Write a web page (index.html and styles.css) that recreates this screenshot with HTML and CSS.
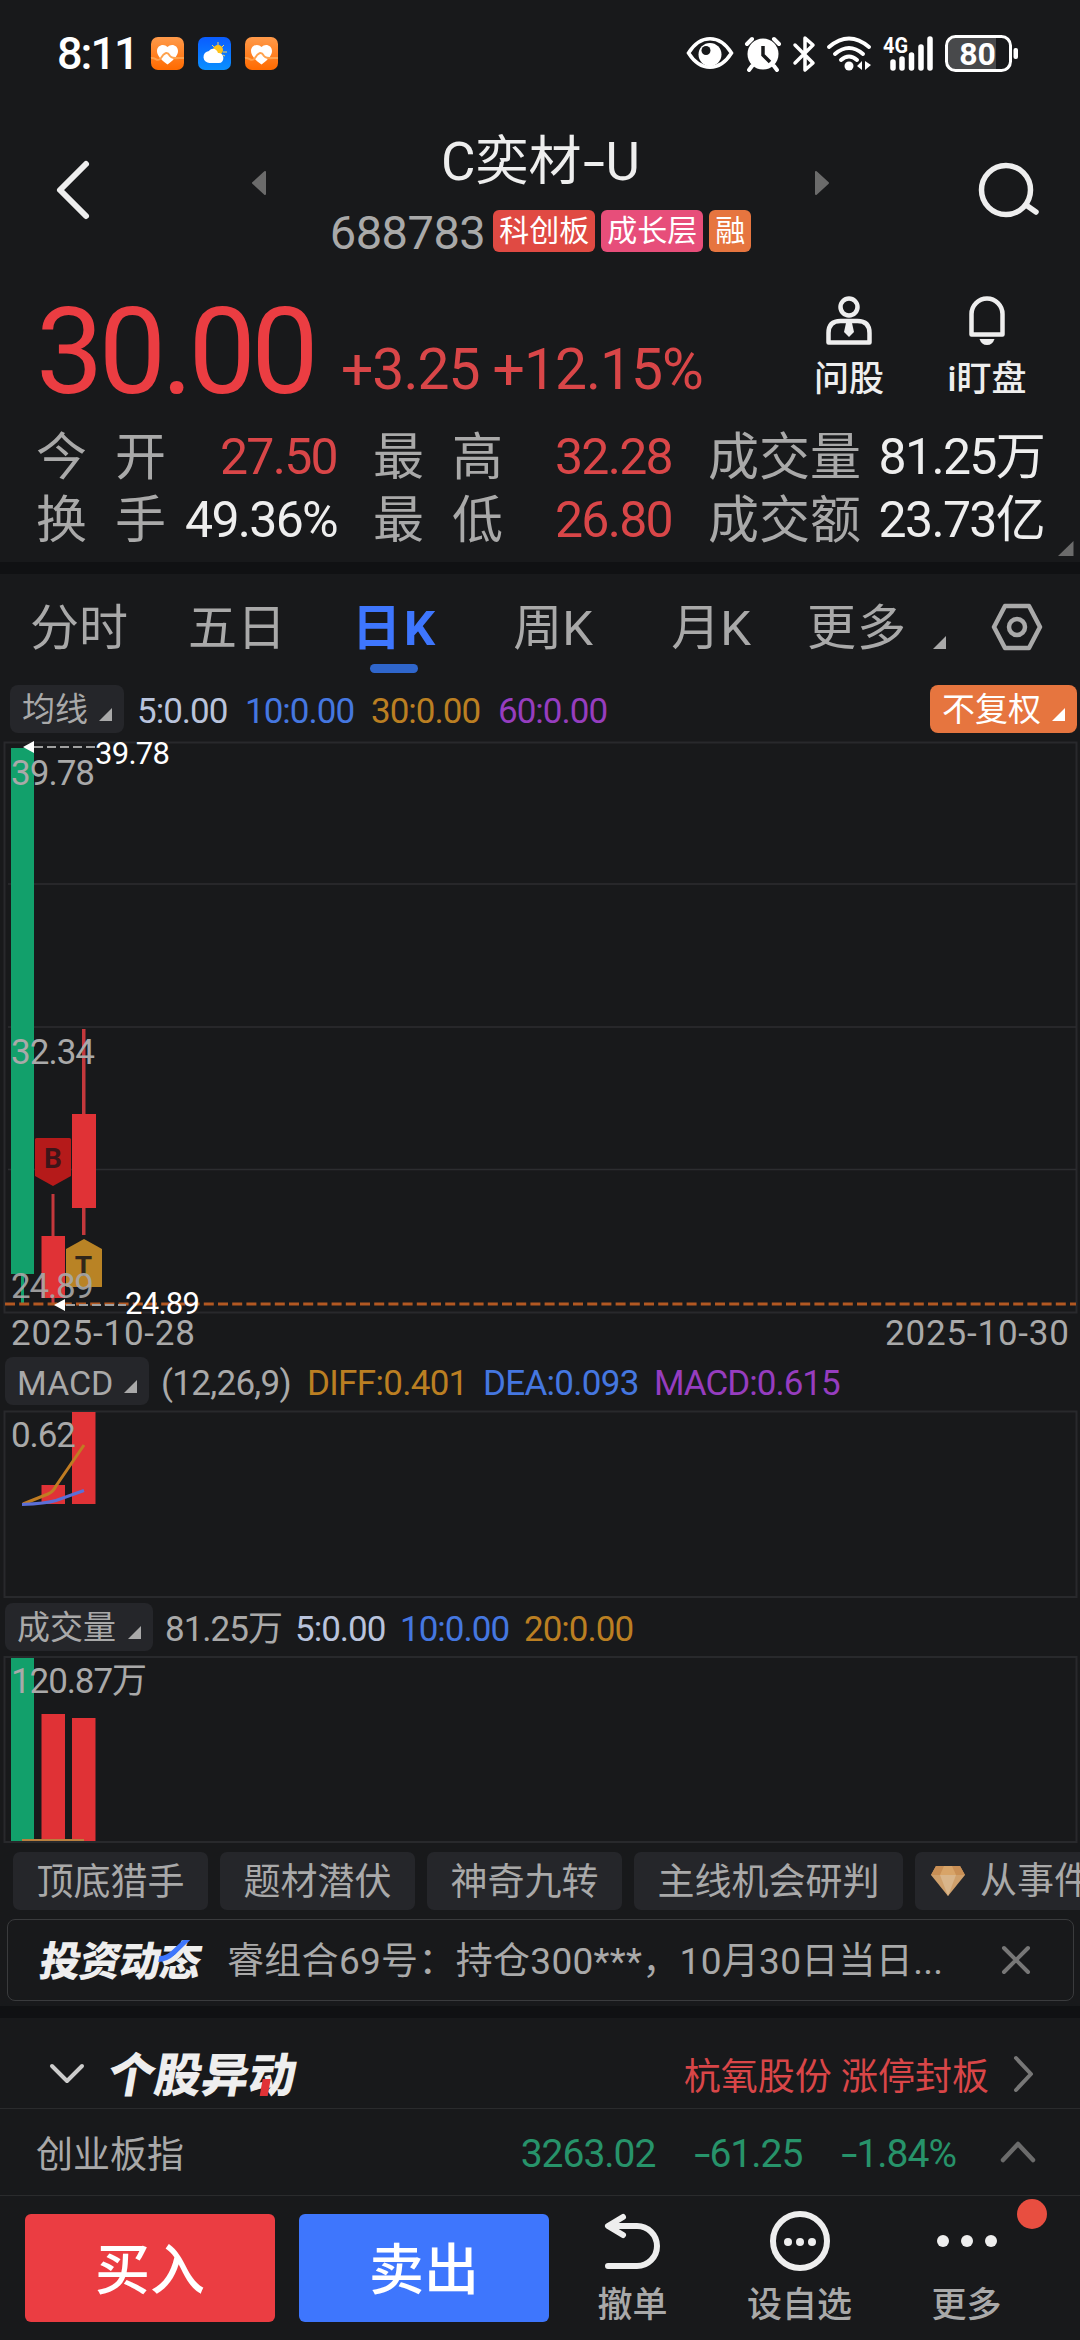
FILE: index.html
```html
<!DOCTYPE html>
<html lang="zh-CN">

<head>
  <meta charset="utf-8">
  <meta name="viewport" content="width=device-width, initial-scale=1">
  <title>C奕材-U 688783</title>
  <link rel="stylesheet" href="styles.css">
</head>

<body>
  <div class="status">
    <span class="time">8:11</span>
    <svg class="app" width="33" height="33" viewBox="0 0 33 33">
      <defs>
        <linearGradient id="orange" x1="0" y1="0" x2="0" y2="1"><stop offset="0" stop-color="#ff9a4a"/><stop offset="1" stop-color="#ff6a00"/></linearGradient>
        <linearGradient id="blue" x1="0" y1="0" x2="0" y2="1"><stop offset="0" stop-color="#0a5cff"/><stop offset="1" stop-color="#0a90ff"/></linearGradient>
      </defs>
      <rect width="33" height="33" rx="7" fill="url(#orange)"/>
      <path d="M16.500 27.500C9 22 6 18 6 14c0-6 7-8 10.500-4C20 6 27 8 27 14c0 4-3 8-10.500 13.500z" fill="#fff"/>
      <path d="M0 21c5-1 6 5 10 0 3-5 6-7 9-2 2 3 7 2 14 2" fill="none" stroke="#ffa24d" stroke-width="2"/>
    </svg>
    <svg class="app" width="33" height="33" viewBox="0 0 33 33">
      <rect width="33" height="33" rx="7" fill="url(#blue)"/>
      <circle cx="20" cy="13" r="5" fill="#ffc21a"/>
      <path d="M20 5v3M14 8l2 2M26 8l-2 2M25 15h4M25 18l2 1" stroke="#ffd65a" stroke-width="1"/>
      <path d="M12 26a6 6 0 0 1-1-12c3-4 8-2 9 2 7-1 7 10 1 10z" fill="#fff"/>
    </svg>
    <svg class="app" width="33" height="33" viewBox="0 0 33 33">
      <rect width="33" height="33" rx="7" fill="url(#orange)"/>
      <path d="M16.500 27.500C9 22 6 18 6 14c0-6 7-8 10.500-4C20 6 27 8 27 14c0 4-3 8-10.500 13.500z" fill="#fff"/>
      <path d="M0 21c5-1 6 5 10 0 3-5 6-7 9-2 2 3 7 2 14 2" fill="none" stroke="#ffa24d" stroke-width="2"/>
    </svg>
    <span class="fill"></span>
    <svg width="332" height="38" viewBox="687 35 332 38">
      <!-- eye -->
      <path d="M688.500 53c12-19 31-19 43 0-12 19-31 19-43 0z" fill="none" stroke="#fff" stroke-width="3.500"/>
      <circle cx="710" cy="54.500" r="11.500" fill="#fff"/><circle cx="706" cy="50.500" r="4.500" fill="#18191b"/>
      <!-- alarm -->
      <circle cx="763" cy="54" r="15.500" fill="#fff"/>
      <path d="M763 46v9l7 7" fill="none" stroke="#18191b" stroke-width="3.500"/>
      <path d="M747 44l5-5M779 44l-5-5M752 66l-3 4M774 66l3 4" stroke="#fff" stroke-width="4" stroke-linecap="round"/>
      <!-- bluetooth -->
      <path d="M795 45l18 18-8 7V38l8 7-18 18" fill="none" stroke="#fff" stroke-width="3.500" stroke-linejoin="round" stroke-linecap="round"/>
      <!-- wifi -->
      <path d="M829 47q20-17 40 0M835 54q14-12 28 0M841 60q8-7 16 0" fill="none" stroke="#fff" stroke-width="4" stroke-linecap="round"/>
      <circle cx="849" cy="66" r="4.500" fill="#fff"/>
      <path d="M857 66l5-5v9zM865 61l6 4-6 5z" fill="#fff"/>
      <!-- signal -->
      <text x="883" y="53" font-size="22" font-weight="700" fill="#fff" textLength="25" lengthAdjust="spacingAndGlyphs">4G</text>
      <path d="M893 62v6M902 59v9M911.500 55v13M921 47v21M930 39v29" stroke="#fff" stroke-width="5.500" stroke-linecap="round"/>
      <!-- battery -->
      <path d="M954 38h42v31h-42q-6 0-6-6V44q0-6 6-6z" fill="#48494b"/>
      <rect x="946.500" y="36.500" width="64" height="34" rx="9" fill="none" stroke="#fff" stroke-width="3"/>
      <rect x="1013.500" y="48" width="4.500" height="11" rx="2" fill="#fff"/>
      <text x="977.500" y="65" font-size="32" font-weight="700" fill="#fff" text-anchor="middle">80</text>
    </svg>
  </div>

  <div class="header">
    <svg class="back" width="40" height="64" viewBox="0 0 40 64"><path d="M34 6L8 32l26 26" fill="none" stroke="#eee" stroke-width="6" stroke-linecap="round" stroke-linejoin="round"/></svg>
    <svg class="prev" width="14" height="24" viewBox="0 0 14 24"><path d="M13 1v22L1 12z" fill="#6b6b6b" stroke="#6b6b6b" stroke-width="2" stroke-linejoin="round"/></svg>
    <div class="name">
      <h1>C奕材<i>-</i>U</h1>
      <div class="code">
        <span class="num">688783</span>
        <b class="tag red">科创板</b>
        <b class="tag pink">成长层</b>
        <b class="tag orange">融</b>
      </div>
    </div>
    <svg class="next" width="14" height="24" viewBox="0 0 14 24"><path d="M1 1v22l12-11z" fill="#6b6b6b" stroke="#6b6b6b" stroke-width="2" stroke-linejoin="round"/></svg>
    <svg class="search" width="64" height="58" viewBox="0 0 64 58"><circle cx="29" cy="29" r="24.500" fill="none" stroke="#eee" stroke-width="5.500"/><path d="M49 44l10 7" stroke="#eee" stroke-width="5.500" stroke-linecap="round"/></svg>
  </div>

  <div class="quote">
    <div class="top">
      <span class="price">30.00</span>
      <span class="change">+3.25 +12.15%</span>
      <div class="act">
        <svg width="48" height="50" viewBox="0 0 48 50"><g fill="none" stroke="#eee" stroke-width="4.500" stroke-linejoin="round"><circle cx="24" cy="12" r="8.500"/><path d="M3.500 47.500V38q0-12 12-12h17q12 0 12 12v9.500z"/></g><path d="M21 28h6l2 9-5 5-5-5z" fill="#eee"/></svg>
        问股
      </div>
      <div class="act">
        <svg width="48" height="50" viewBox="0 0 48 50"><path d="M8.500 39.500V19a15.500 15.500 0 0 1 31 0v20.500z" fill="none" stroke="#eee" stroke-width="4.500" stroke-linejoin="round"/><path d="M16.500 44h15q-2 6-7.500 6t-7.500-6z" fill="#eee"/></svg>
        i盯盘
      </div>
    </div>
    <div class="stats">
      <span class="k w2">今开</span><span class="v up">27.50</span>
      <span class="k w2 mid">最高</span><span class="v up">32.28</span>
      <span class="k mid">成交量</span><span class="v">81.25万</span>
      <span class="k w2">换手</span><span class="v">49.36%</span>
      <span class="k w2 mid">最低</span><span class="v up">26.80</span>
      <span class="k mid">成交额</span><span class="v">23.73亿</span>
    </div>
    <svg class="corner" width="16" height="15"><path d="M15.500 0v15H0z" fill="#6b6b6b"/></svg>
  </div>
  <div class="band"></div>

  <div class="tabs">
    <span>分时</span>
    <span>五日</span>
    <span class="on">日K</span>
    <span>周K</span>
    <span>月K</span>
    <span class="more">更多</span>
    <svg class="tri" width="13" height="13"><path d="M13 0v13H0z"/></svg>
    <svg class="hex" width="52" height="48" viewBox="0 0 52 48"><path d="M14 3h24l11 21-11 21H14L3 24z" fill="none" stroke="#a9a9a9" stroke-width="4.500" stroke-linejoin="round"/><circle cx="26" cy="24" r="8" fill="none" stroke="#a9a9a9" stroke-width="4.500"/></svg>
  </div>

  <div class="legend ma">
    <span class="pill">均线<svg class="tri" width="13" height="13"><path d="M13 0v13H0z"/></svg></span>
    <span class="c1">5:0.00</span>
    <span class="c2">10:0.00</span>
    <span class="c3">30:0.00</span>
    <span class="c4">60:0.00</span>
    <span class="pill adj">不复权<svg class="tri" width="13" height="13"><path d="M13 0v13H0z"/></svg></span>
  </div>

  <svg class="chart" width="1080" height="620" viewBox="0 737 1080 620">
    <path d="M4.500 742.500h1072v570H4.500z" fill="none" stroke="#28292c" stroke-width="2"/>
    <path d="M8 884h1068M8 1027h1068M8 1169.500h1068" stroke="#2c2d30" stroke-width="1.500"/>
    <g fill="#12a06b"><path d="M11 748h23v526H11zM21 1274h3v31h-3z"/></g>
    <g fill="#e03236">
      <path d="M41.500 1236H65v62H41.500zM72 1114h24v94H72z"/>
      <path d="M51.500 1194h3v42h-3zM51.500 1298h3v6h-3zM82 1029h3.500v85H82zM82 1208h3.500v27H82z" fill="#c4383c"/>
    </g>
    <path d="M36.500 1138h33q1.500 0 1.500 1.500V1176l-18 10-18-10v-36.500q0-1.500 1.500-1.500z" fill="#b51a1a"/>
    <path d="M66 1249l18-10 18 10v37.500q0 .5-1 .5H67q-1 0-1-1z" fill="#b98325"/>
    <text x="53" y="1168" class="mark" fill="#3d1519">B</text>
    <text x="83.500" y="1276" class="mark" fill="#30261a">T</text>
    <path d="M5 1304h1071" stroke="#b25822" stroke-width="3" stroke-dasharray="10 4.200"/>
    <path d="M34 747h62M66 1305h60" stroke="#a0a0a0" stroke-width="2" stroke-dasharray="9 4"/>
    <path d="M23 747l11-6v12zM54 1305l11-6v12z" fill="#fff"/>
    <g class="axis">
      <text x="11" y="785" textLength="84">39.78</text>
      <text x="11" y="1064" textLength="84">32.34</text>
      <text x="11" y="1298" textLength="83" opacity=".9">24.89</text>
      <text x="11" y="1345" textLength="184">2025-10-28</text>
      <text x="885" y="1345" textLength="184">2025-10-30</text>
    </g>
    <g class="peak">
      <text x="95" y="764" textLength="75">39.78</text>
      <text x="125" y="1314" textLength="75">24.89</text>
    </g>
  </svg>

  <div class="legend macd">
    <span class="pill">MACD<svg class="tri" width="13" height="13"><path d="M13 0v13H0z"/></svg></span>
    <span>(12,26,9)</span>
    <span class="c3">DIFF:0.401</span>
    <span class="c2">DEA:0.093</span>
    <span class="c4">MACD:0.615</span>
  </div>
  <svg class="chart" width="1080" height="198" viewBox="0 1405 1080 198">
    <path d="M4.500 1411.500h1072v185.500H4.500z" fill="none" stroke="#28292c" stroke-width="2"/>
    <path d="M72 1412h23.500v92H72zM41.500 1485H65v19H41.500z" fill="#e03236"/>
    <text class="axis" x="11" y="1447" textLength="65">0.62</text>
    <path d="M23 1504l25-10q5-2 8-8l28-41" fill="none" stroke="#c07c22" stroke-width="3"/>
    <path d="M22 1504.500q24-1 34-4l28-10" fill="none" stroke="#5b6fd8" stroke-width="3"/>
  </svg>

  <div class="legend vol">
    <span class="pill">成交量<svg class="tri" width="13" height="13"><path d="M13 0v13H0z"/></svg></span>
    <span>81.25万</span>
    <span class="c1">5:0.00</span>
    <span class="c2">10:0.00</span>
    <span class="c3">20:0.00</span>
  </div>
  <svg class="chart" width="1080" height="201" viewBox="0 1651 1080 201">
    <path d="M4.500 1657h1072v185H4.500z" fill="none" stroke="#28292c" stroke-width="2"/>
    <path d="M11 1658h23v183H11z" fill="#12a06b"/>
    <path d="M41.500 1714H65v127H41.500zM72 1718h23.500v123H72z" fill="#e03236"/>
    <path d="M22 1840h62" stroke="#b9803f" stroke-width="2"/>
    <text class="axis" x="11" y="1693" textLength="136">120.87万</text>
  </svg>

  <div class="chips">
    <span>顶底猎手</span>
    <span>题材潜伏</span>
    <span>神奇九转</span>
    <span>主线机会研判</span>
    <span class="gem"><svg width="36" height="32" viewBox="0 0 36 32"><path d="M6 1h24l5 9-17 21L1 10z" fill="#cfa06c"/><path d="M6 1h24l5 9H1z" fill="#c98f55"/><path d="M10 10h16l-8 21z" fill="#d9b58a"/><path d="M10 10l4-9h8l4 9z" fill="#d8a468"/></svg>从事件</span>
  </div>

  <div class="news">
    <span class="logo">投资动态
      <svg width="30" height="24" viewBox="0 0 30 24"><path d="M1 17q7 0 12-6L22 1h7L17 15q-7 8-16 8z" fill="#3e76fd"/></svg>
    </span>
    <span class="msg">睿组合69号：持仓300***，10月30日当日...</span>
    <svg width="32" height="32" viewBox="0 0 32 32"><path d="M4 4l24 24M28 4L4 28" stroke="#777" stroke-width="4" stroke-linecap="round"/></svg>
  </div>
  <div class="band"></div>

  <div class="row move">
    <svg width="36" height="22" viewBox="0 0 36 22"><path d="M3 3l15 15L33 3" fill="none" stroke="#ccc" stroke-width="4" stroke-linecap="round" stroke-linejoin="round"/></svg>
    <span class="logo">个股异动<i></i></span>
    <span class="fill"></span>
    <span class="up">杭氧股份 涨停封板</span>
    <svg class="go" width="22" height="38" viewBox="0 0 22 38"><path d="M3 3l15 16L3 35" fill="none" stroke="#777" stroke-width="4" stroke-linecap="round" stroke-linejoin="round"/></svg>
  </div>
  <div class="row index">
    <span>创业板指</span>
    <span class="fill"></span>
    <span class="down">3263.02</span>
    <span class="down d2"><i>-</i>61.25</span>
    <span class="down d3"><i>-</i>1.84%</span>
    <svg width="36" height="22" viewBox="0 0 36 22"><path d="M3 19L18 3l15 16" fill="none" stroke="#6b6b6b" stroke-width="4.500" stroke-linecap="round" stroke-linejoin="round"/></svg>
  </div>

  <div class="trade">
    <a class="btn buy">买入</a>
    <a class="btn sell">卖出</a>
    <div class="tool">
      <svg width="60" height="62" viewBox="0 0 60 62"><path d="M20 7L5 16l15 9M6 16h28a20 20 0 0 1 0 40H5" fill="none" stroke="#eee" stroke-width="6" stroke-linecap="round" stroke-linejoin="round"/></svg>
      撤单
    </div>
    <div class="tool">
      <svg width="62" height="62" viewBox="0 0 62 62"><circle cx="31" cy="31" r="27" fill="none" stroke="#eee" stroke-width="6"/><g fill="#eee"><circle cx="19" cy="32" r="4"/><circle cx="31" cy="32" r="4"/><circle cx="43" cy="32" r="4"/></g></svg>
      设自选
    </div>
    <div class="tool">
      <svg width="62" height="62" viewBox="0 0 62 62"><g fill="#eee"><circle cx="7" cy="31" r="6"/><circle cx="31" cy="31" r="6"/><circle cx="55" cy="31" r="6"/></g></svg>
      更多
      <em class="dot"></em>
    </div>
  </div>
</body>

</html>
```

FILE: styles.css
```css
* {
  box-sizing: border-box;
}

body {
  margin: 0;
  width: 1080px;
  height: 2340px;
  overflow: hidden;
  background: #18191b;
  color: #a9a9a9;
  font-family: Roboto, "Noto Sans CJK SC", sans-serif;
  font-size: 37px;
  white-space: nowrap;
}

svg {
  display: block;
  flex: none;
  overflow: visible;
}

i, em {
  font-style: normal;
}

.fill {
  flex: 1;
}

.up {
  color: #d94648;
}

.down {
  color: #27936a;
}

/* status bar */
.status {
  display: flex;
  align-items: center;
  height: 107px;
  padding: 0 61px 0 57px;
}

.time {
  width: 94px;
  color: #fff;
  font-size: 45px;
  font-weight: 500;
  letter-spacing: -2px;
}

.app {
  margin-right: 14px;
}

/* header */
.header {
  display: flex;
  align-items: center;
  height: 165px;
}

.back {
  margin-left: 52px;
}

.prev {
  margin: 0 0 13px 160px;
}

.name {
  width: 549px;
  height: 165px;
  padding-top: 19px;
  text-align: center;
}

h1 {
  margin: 0 0 12px;
  color: #eee;
  font-size: 53px;
  font-weight: 400;
  line-height: 72px;
}

h1 i {
  display: inline-block;
  width: 24px;
  transform: scaleX(1.5);
}

.code {
  display: flex;
  justify-content: center;
  height: 42px;
  line-height: 42px;
}

.num {
  margin-right: 8px;
  font-size: 47px;
  letter-spacing: -.5px;
  line-height: 46px;
}

.tag {
  margin-right: 6px;
  padding: 0 6px;
  border-radius: 6px;
  color: #fff;
  font-size: 30px;
  font-weight: 400;
}

.tag.red {
  background: #e04a43;
}

.tag.pink {
  background: #e74e7a;
}

.tag.orange {
  margin-right: 0;
  background: #e6753f;
}

.next {
  margin-bottom: 13px;
}

.search {
  margin-left: 148px;
}

/* quote */
.quote {
  position: relative;
  height: 290px;
  padding: 22px 0 0 36px;
}

.top {
  display: flex;
  height: 132px;
}

.price {
  flex: none;
  width: 305px;
  color: #eb3d42;
  font-size: 120px;
  letter-spacing: -4.7px;
  line-height: 117px;
}

.change {
  flex: none;
  width: 439px;
  color: #d94648;
  font-size: 57px;
  letter-spacing: -1px;
  line-height: 151px;
}

.act {
  display: flex;
  flex: none;
  flex-direction: column;
  align-items: center;
  width: 138px;
  color: #eee;
  font-size: 35px;
  font-weight: 500;
  line-height: 69px;
}

.act svg {
  margin-top: 1px;
}

.stats {
  display: grid;
  grid-template-columns: 130px 171px 166px 169px 189px 183px;
  line-height: 63px;
}

.k {
  font-size: 51px;
}

.w2 {
  letter-spacing: 28px;
}

.mid {
  padding-left: 36px;
}

.v {
  color: #eee;
  font-size: 50px;
  letter-spacing: -1.7px;
  text-align: right;
}

.v.up {
  color: #d94648;
}

.corner {
  position: absolute;
  right: 6px;
  bottom: 6px;
}

.band {
  height: 12px;
  background: #101113;
}

/* period tabs */
.tabs {
  display: flex;
  align-items: center;
  height: 106px;
  font-size: 49px;
}

.tabs span {
  position: relative;
  top: -4px;
  width: 158px;
  text-align: center;
}

.tabs .on {
  color: #3e76fd;
  font-weight: 700;
  letter-spacing: 3px;
}

.tabs .on::after {
  content: "";
  position: absolute;
  left: 54px;
  bottom: -14px;
  width: 48px;
  height: 9px;
  border-radius: 5px;
  background: #2f66cc;
}

.tabs .more {
  width: 131px;
  padding-left: 17px;
  text-align: left;
  letter-spacing: 1px;
}

.tri {
  fill: #a9a9a9;
}

.tabs .tri {
  margin: 31px 45px 0 12px;
}

/* indicator legends */
.legend {
  display: flex;
  height: 48px;
  font-size: 35px;
  letter-spacing: -1px;
  line-height: 53px;
}

.pill {
  display: flex;
  height: 48px;
  padding: 0 12px;
  border-radius: 8px;
  background: #25262a;
  font-size: 33px;
  letter-spacing: 0;
  line-height: 50px;
}

.pill .tri {
  margin: 23px 0 0 auto;
}

.ma {
  height: 52px;
  margin-top: 5px;
  padding-left: 10px;
}

.ma .pill {
  width: 114px;
  margin-right: 13px;
}

.ma .c1 { width: 108px; }
.ma .c2 { width: 126px; }
.ma .c3 { width: 127px; }
.ma .c4 { width: 112px; }

.ma .adj {
  width: 147px;
  margin: 0 3px 0 auto;
  background: #e6753f;
  color: #fff;
}

.adj .tri {
  fill: #fff;
}

.c1 { color: #b9c3dc; }
.c2 { color: #4577e0; }
.c3 { color: #bb7f22; }
.c4 { color: #963dbf; }

.macd,
.vol {
  padding-left: 5px;
}

.macd {
  letter-spacing: -.7px;
}

.macd .pill {
  width: 144px;
  margin-right: 12px;
  font-size: 34px;
  line-height: 52px;
}

.macd span:nth-child(2) { width: 146px; }
.macd .c3 { width: 176px; }
.macd .c2 { width: 171px; }
.macd .c4 { letter-spacing: -1px; }

.vol .pill {
  width: 148px;
  margin-right: 12px;
}

.vol span:nth-child(2) { width: 130px; }
.vol .c1 { width: 105px; }
.vol .c2 { width: 124px; }

/* charts */
.axis {
  fill: #a9a9a9;
  font-size: 35px;
}

.peak {
  fill: #fff;
  font-size: 31px;
}

.mark {
  font-size: 28px;
  font-weight: 700;
  text-anchor: middle;
}

.chips {
  display: flex;
  gap: 12px;
  height: 58px;
  padding-left: 13px;
  overflow: hidden;
  line-height: 61px;
}

.chips span {
  flex: none;
  width: 195px;
  border-radius: 7px;
  background: #25262a;
  text-align: center;
}

.chips span:nth-child(4) {
  width: 269px;
}

.chips .gem {
  display: flex;
  align-items: center;
  width: 260px;
  padding-left: 15px;
}

.gem svg {
  margin-right: 14px;
}

.news {
  display: flex;
  align-items: center;
  height: 82px;
  margin: 9px 6px 5px 7px;
  padding-left: 33px;
  border: 1px solid #3a3b3d;
  border-radius: 8px;
}

.logo {
  position: relative;
  color: #eee;
  font-size: 41px;
  font-weight: 900;
  letter-spacing: -1px;
  transform: skewX(-10deg);
}

.logo svg {
  position: absolute;
  left: 117px;
  top: 11px;
}

.news .logo {
  top: -2px;
  width: 186px;
}

.msg {
  width: 773px;
  margin-top: -5px;
  letter-spacing: .3px;
}

.row {
  display: flex;
  align-items: center;
  border-bottom: 1px solid #2a2b2d;
}

.move {
  height: 91px;
  padding: 22px 45px 0 49px;
}

.move .logo {
  top: -3px;
  margin-left: 24px;
  font-size: 47px;
  letter-spacing: 0;
}

.move .logo i {
  position: absolute;
  left: 155px;
  bottom: 10px;
  width: 8px;
  height: 17px;
  background: #e03236;
}

.go {
  margin-left: 24px;
}

.index {
  height: 87px;
  padding: 0 44px 0 36px;
}

.down {
  padding-top: 3px;
  font-size: 39px;
  letter-spacing: -1px;
}

.down i {
  display: inline-block;
  width: 18px;
  text-align: right;
  transform: scaleX(1.5);
  transform-origin: right;
}

.d2,
.d3 {
  margin-left: 36px;
}

.d3 {
  margin-right: 44px;
}

/* trade bar */
.trade {
  display: flex;
  height: 144px;
  padding: 18px 0 0 25px;
}

.btn {
  width: 250px;
  height: 108px;
  margin-right: 24px;
  border-radius: 6px;
  background: #eb3d42;
  color: #fff;
  font-size: 55px;
  font-weight: 500;
  line-height: 112px;
  text-align: center;
}

.sell {
  margin-right: 0;
  background: #3e76fd;
}

.tool {
  position: relative;
  display: flex;
  flex-direction: column;
  align-items: center;
  width: 167px;
  margin-top: -4px;
  font-size: 35px;
  font-weight: 500;
  line-height: 68px;
}

.dot {
  position: absolute;
  left: 134px;
  top: -11px;
  width: 30px;
  height: 30px;
  border-radius: 50%;
  background: #e84e40;
}
```
